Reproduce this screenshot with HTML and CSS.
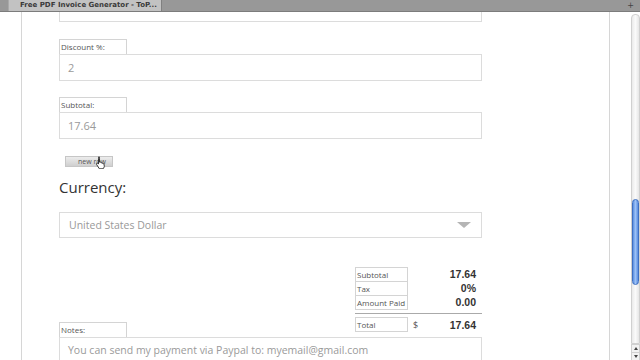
FILE: index.html
```html
<!DOCTYPE html>
<html lang="en">
<head>
    <meta charset="UTF-8">
    <meta name="viewport" content="width=device-width, initial-scale=1.0">
    <title>Free PDF Invoice Generator</title>
    <link rel="stylesheet" href="styles.css">
</head>
<body>
    <div class="tabbar">
        <div class="tab">Free PDF Invoice Generator - ToP...</div>
        <span class="tab-plus">+</span>
    </div>

    <div class="window">
        <div class="gutter"></div>

        <div class="content">
            <div class="form">
                <div class="input cut"></div>

                <div class="field">
                    <div class="field-label">Discount %:</div>
                    <div class="input">2</div>
                </div>

                <div class="field">
                    <div class="field-label">Subtotal:</div>
                    <div class="input">17.64</div>
                </div>

                <div class="button-row">
                    <button class="new-row">new row</button>
                    <svg class="cursor" width="11" height="13" viewBox="0 0 11 13">
                        <path d="M3.5 1.2c.6 0 1 .4 1 1v4l.3-.1c.5-.2 1 0 1.2.4l.2.4c.5-.3 1.1-.1 1.3.4.5-.2 1.1 0 1.3.5l.4 1.3c.3 1 .1 2.1-.5 2.9l-.6.8H4.4L1.6 8.5c-.3-.5-.2-1 .2-1.3.4-.2.9-.1 1.2.3l.5.6V2.2c0-.6.4-1 1-1z" fill="#fff" stroke="#222" stroke-width="0.9"/>
                    </svg>
                </div>

                <h3 class="section-title">Currency:</h3>

                <div class="select">
                    <span>United States Dollar</span>
                    <span class="arrow"></span>
                </div>

                <div class="summary">
                    <div class="summary-row">
                        <span class="summary-label">Subtotal</span>
                        <span class="summary-value">17.64</span>
                    </div>
                    <div class="summary-row">
                        <span class="summary-label">Tax</span>
                        <span class="summary-value">0%</span>
                    </div>
                    <div class="summary-row">
                        <span class="summary-label">Amount Paid</span>
                        <span class="summary-value">0.00</span>
                    </div>
                </div>

                <div class="notes-row">
                    <div class="field-label notes-label">Notes:</div>
                    <div class="summary-row total-row">
                        <span class="summary-label">Total</span>
                        <span class="currency-sign">$</span>
                        <span class="summary-value">17.64</span>
                    </div>
                </div>
                <div class="input notes">You can send my payment via Paypal to: myemail@gmail.com</div>
            </div>
        </div>

        <div class="side"></div>

        <div class="scrollbar">
            <div class="track">
                <div class="thumb"></div>
            </div>
            <div class="scroll-btn up"></div>
            <div class="scroll-btn down"></div>
        </div>
    </div>
</body>
</html>
```

FILE: styles.css
```css
body {
    margin: 0;
    width: 640px;
    height: 360px;
    overflow: hidden;
    font-family: "Open Sans", Arial, sans-serif;
    background: #fff;
}
.tabbar {
    height: 12px;
    background: #989898;
    border-bottom: 1px solid #7c7c7c;
    display: flex;
    align-items: stretch;
    box-sizing: border-box;
    position: relative;
    z-index: 2;
}
.tab {
    margin-left: 8px;
    width: 154px;
    background: #c2c2c2;
    border-right: 1px solid #808080;
    border-left: 1px solid #a9a9a9;
    box-sizing: border-box;
    font-family: "DejaVu Sans", sans-serif;
    font-weight: bold;
    font-size: 7px;
    line-height: 11px;
    color: #3a3a3a;
    padding-left: 11px;
    white-space: nowrap;
    overflow: hidden;
}
.tab-plus {
    margin-left: auto;
    margin-right: 6px;
    font-family: "DejaVu Sans", sans-serif;
    font-size: 8px;
    line-height: 11px;
    color: #444;
}
.window {
    display: flex;
    height: 348px;
}
.gutter {
    width: 21px;
    border-right: 1px solid #d6d6d6;
}
.content {
    width: 587px;
    border-right: 1px solid #d6d6d6;
    overflow: hidden;
}
.form {
    width: 423px;
    margin-left: 37px;
    display: flex;
    flex-direction: column;
}
.input {
    height: 25px;
    border: 1px solid #dcdcdc;
    font-size: 11px;
    line-height: 25px;
    color: #9a9a9a;
    padding-left: 8px;
}
.input.cut {
    height: 9px;
    border-top: none;
}
.field {
    margin-top: 17px;
    display: flex;
    flex-direction: column;
}
.field + .field {
    margin-top: 16px;
}
.field-label {
    width: 65px;
    height: 14px;
    border: 1px solid #d4d4d4;
    border-bottom: none;
    font-size: 8px;
    line-height: 14px;
    color: #555;
    padding-left: 1px;
}
.button-row {
    margin-top: 17px;
    margin-left: 6px;
    height: 11px;
    position: relative;
}
.new-row {
    display: block;
    width: 48px;
    height: 11px;
    padding: 0 0 0 12px;
    border: 1px solid #c6c6c6;
    background: linear-gradient(#ececec, #cfcfcf);
    font-family: "Open Sans", Arial, sans-serif;
    font-size: 7px;
    line-height: 9px;
    color: #555;
    text-align: left;
}
.cursor {
    position: absolute;
    left: 30px;
    top: 0;
}
.section-title {
    margin: 10px 0 0;
    font-size: 15px;
    font-weight: normal;
    line-height: 20px;
    color: #333;
}
.select {
    margin-top: 15px;
    height: 24px;
    border: 1px solid #dcdcdc;
    display: flex;
    align-items: center;
    justify-content: space-between;
    padding: 0 10px 0 9px;
    font-size: 10.5px;
    color: #999;
}
.arrow {
    width: 0;
    height: 0;
    border-left: 7px solid transparent;
    border-right: 7px solid transparent;
    border-top: 6px solid #b5b5b5;
}
.summary {
    margin-top: 29px;
    margin-left: 296px;
    width: 127px;
    padding-bottom: 4px;
    border-bottom: 1px solid #aaa;
}
.summary-row {
    display: flex;
    align-items: center;
    height: 14px;
}
.summary-label {
    width: 50px;
    height: 13px;
    border: 1px solid #d4d4d4;
    border-bottom: none;
    font-size: 8px;
    line-height: 13px;
    color: #555;
    padding-left: 1px;
}
.summary-row:last-child .summary-label {
    border-bottom: 1px solid #d4d4d4;
}
.summary-value {
    margin-left: auto;
    margin-right: 6px;
    font-family: "Liberation Sans", Arial, sans-serif;
    font-weight: bold;
    font-size: 10.5px;
    color: #333;
}
.notes-row {
    display: flex;
    justify-content: space-between;
    align-items: flex-start;
    margin-top: 3px;
}
.notes-label {
    margin-top: 5px;
}
.total-row {
    width: 127px;
    height: 15px;
}
.total-row .summary-label {
    border-bottom: 1px solid #d4d4d4;
}
.currency-sign {
    margin-left: 5px;
    font-size: 9px;
    color: #555;
}
.notes {
    height: 30px;
    line-height: 24px;
    font-size: 10.5px;
    border-bottom: none;
}
.side {
    width: 21px;
}
.scrollbar {
    width: 9px;
    display: flex;
    flex-direction: column;
}
.track {
    flex: 1;
    margin-top: 2px;
    border: 1px solid #d0d0d0;
    border-radius: 4px 4px 0 0;
    background: linear-gradient(to right, #eaeaea, #fafafa, #e6e6e6);
}
.thumb {
    margin-top: 184px;
    height: 84px;
    border-radius: 4px;
    border: 1px solid #3e6fc2;
    background: linear-gradient(to right, #5b8fe0, #9cc1f6, #5a8ee0);
}
.scroll-btn {
    height: 7px;
    display: flex;
    align-items: center;
    justify-content: center;
    background: #f2f2f2;
    border-left: 1px solid #d0d0d0;
    border-right: 1px solid #d0d0d0;
    border-top: 1px solid #d0d0d0;
}
.scroll-btn::after {
    content: "";
    border-left: 2px solid transparent;
    border-right: 2px solid transparent;
}
.up::after {
    border-bottom: 3px solid #444;
}
.down::after {
    border-top: 3px solid #444;
}
```
